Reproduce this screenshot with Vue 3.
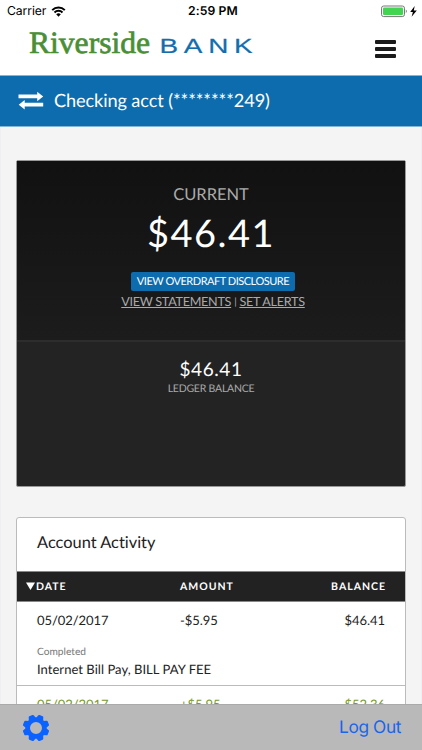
<script setup>
const rows = [
  { date: '05/02/2017', amount: '-$5.95', balance: '$46.41', status: 'Completed', memo: 'Internet Bill Pay, BILL PAY FEE', credit: false },
  { date: '05/02/2017', amount: '+$5.95', balance: '$52.36', credit: true },
]
const teeth = [0, 45, 90, 135, 180, 225, 270, 315]
</script>

<template>
  <div class="screen">
    <div class="status">
      <div class="carrier">
        <span>Carrier</span>
        <svg class="wifi" width="15" height="11" viewBox="0 0 14 11">
          <path d="M.7 4.1a8.9 8.9 0 0 1 12.6 0M3 6.5a5.7 5.7 0 0 1 8 0" fill="none" stroke="#000" stroke-width="2" />
          <path d="M7 10.7 4.7 8.3a3.3 3.3 0 0 1 4.6 0z" fill="#000" />
        </svg>
      </div>
      <span class="time">2:59 PM</span>
      <svg class="battery" width="38" height="13" viewBox="0 0 38 13">
        <rect x=".5" y="1" width="23" height="10.6" rx="2.2" fill="#fff" stroke="#777" />
        <rect x="2" y="2.5" width="20" height="7.6" rx="1" fill="#43d551" />
        <path d="M24.8 4.6c1.4.6 1.4 2.9 0 3.5z" fill="#777" />
        <path d="M33.7 1 29.2 7h2.7l-1.3 4.8L35.8 5.5h-3z" fill="#000" />
      </svg>
    </div>

    <header class="header">
      <svg class="logo" width="230" height="34" viewBox="0 0 230 34">
        <text class="river" x="1" y="27" textLength="121" lengthAdjust="spacingAndGlyphs">Riverside</text>
        <g transform="translate(131.5 26.5) scale(1.36 1)">
          <text class="bank" x="0" y="0" textLength="68.5" lengthAdjust="spacing">BANK</text>
        </g>
      </svg>
      <div class="menu"><i></i><i></i><i></i></div>
    </header>

    <div class="account">
      <svg width="26" height="20" viewBox="0 0 26 20" fill="#fff">
        <path d="M.5 3.6h18.7V.7l6 4.8-6 4.8V7.3H.5zM25.2 11.7H6.7V8.9l-6 4.8 6 4.8v-3h18.5z" />
      </svg>
      <span>Checking acct (********249)</span>
    </div>

    <main class="content">
      <section class="summary">
        <div class="current">
          <div class="label">CURRENT</div>
          <div class="amount">$46.41</div>
          <div class="disclosure"><span>VIEW OVERDRAFT DISCLOSURE</span></div>
          <div class="links"><a>VIEW STATEMENTS</a><span class="bar">|</span><a>SET ALERTS</a></div>
        </div>
        <div class="ledger">
          <div class="ledger-amount">$46.41</div>
          <div class="ledger-label">LEDGER BALANCE</div>
        </div>
      </section>

      <section class="activity">
        <h2>Account Activity</h2>
        <div class="thead">
          <div class="sort">
            <svg width="9" height="9" viewBox="0 0 9 9"><path d="M0 .5h9L4.5 8z" fill="#fff" /></svg>
            <span>DATE</span>
          </div>
          <span>AMOUNT</span>
          <span class="right">BALANCE</span>
        </div>
        <div v-for="(r, i) in rows" :key="i" class="entry" :class="{ credit: r.credit }">
          <div class="values">
            <span>{{ r.date }}</span><span>{{ r.amount }}</span><span class="right">{{ r.balance }}</span>
          </div>
          <template v-if="r.status">
            <div class="state">{{ r.status }}</div>
            <div class="memo">{{ r.memo }}</div>
          </template>
        </div>
      </section>
    </main>

    <footer class="toolbar">
      <svg width="28" height="28" viewBox="-14 -14 28 28">
        <circle r="8.3" fill="none" stroke="#0b62ff" stroke-width="4.6" />
        <path v-for="t in teeth" :key="t" :transform="`rotate(${t + 22.5})`" d="M-3.9-9.2-2.7-12.6Q-2.5-13.3-1.7-13.3H1.7Q2.5-13.3 2.7-12.6L3.9-9.2z" fill="#0b62ff" />
      </svg>
      <span class="logout">Log Out</span>
    </footer>
  </div>
</template>

<style>
body { margin: 0; overflow: hidden; }
</style>

<style scoped>
.screen { width: 422px; height: 750px; display: flex; flex-direction: column; overflow: hidden; background: #fff; font-family: Lato, sans-serif; font-variant-ligatures: none; text-rendering: geometricPrecision; white-space: nowrap; color: #222; }
.screen * { box-sizing: border-box; }
.status { height: 22px; flex: none; display: grid; grid-template-columns: 1fr auto 1fr; align-items: center; padding: 0 3px 0 7px; font: 12.2px/22px Inter, sans-serif; color: #000; }
.carrier { display: flex; align-items: center; gap: 5px; letter-spacing: -.1px; }
.time { font-weight: 600; letter-spacing: .1px; }
.battery { justify-self: end; }
.header { height: 53px; flex: none; display: flex; justify-content: space-between; padding: 4px 26px 0 28px; }
.river { font: 31px "Liberation Serif", serif; fill: #4a8f35; stroke: #4a8f35; stroke-width: .7; }
.bank { font: 20.5px "Liberation Sans", sans-serif; fill: #126eae; stroke: #126eae; stroke-width: .2; }
.menu { width: 21px; display: flex; flex-direction: column; gap: 3px; padding-top: 14px; }
.menu i { height: 4px; border-radius: 1px; background: #1b1b1b; }
.account { height: 52px; flex: none; display: flex; align-items: center; gap: 10px; padding: 0 18px 3px; background: #0d6cad; border-top: 1px solid #83b5d6; border-bottom: 1px solid #83b5d6; color: #fff; font-size: 18.2px; line-height: 24px; letter-spacing: -.12px; }
.account svg { flex: none; position: relative; top: 1px; }
.content { flex: 1; min-height: 0; overflow: hidden; background: #f4f4f4; border-left: 1px solid #efeff3; border-right: 1px solid #efeff3; padding: 33px 15px 0; }
.summary { height: 327px; border: 1px solid #999; border-radius: 2px; background: #232323; text-align: center; }
.current { height: 181px; padding-top: 21px; background: linear-gradient(#111, #1c1c1c); border-bottom: 2px solid #2d2d2d; }
.label { font-size: 16.5px; line-height: 24px; color: #aaa; }
.amount { font-size: 38px; line-height: 54px; letter-spacing: 1.5px; color: #fff; }
.disclosure { height: 21px; margin-top: 12px; padding-left: 4px; display: flex; justify-content: center; }
.disclosure span { width: 164px; height: 19px; border-radius: 2px; background: #0d6cad; color: #fff; font-size: 11px; line-height: 20px; letter-spacing: -.48px; }
.links { padding-left: 4px; display: flex; justify-content: center; gap: 3px; font-size: 12.6px; line-height: 18px; letter-spacing: -.27px; color: #aaa; }
.links a { text-decoration: underline; }
.bar { font-size: 10px; }
.ledger { padding-top: 16px; }
.ledger-amount { font-size: 19px; line-height: 24px; letter-spacing: .6px; color: #fff; }
.ledger-label { font-size: 10.5px; line-height: 15px; letter-spacing: -.22px; color: #aaa; }
.activity { height: 360px; margin-top: 30px; border: 1px solid #bbb; border-radius: 3px; background: #fff; }
h2 { height: 53px; margin: 0; padding-left: 20px; font-size: 16.4px; font-weight: 400; line-height: 50px; }
.thead, .values { display: grid; grid-template-columns: 143px 1fr auto; padding: 0 20px; }
.thead { height: 31px; align-items: center; background: #222; color: #fff; font-size: 10.5px; font-weight: 700; letter-spacing: 1px; border-top: 1px solid #888; border-bottom: 1px solid #888; }
.sort { display: flex; align-items: center; gap: 1px; margin-left: -11px; }
.thead .right { margin-right: -1px; }
.entry { height: 84px; padding-top: 8px; border-bottom: 1px solid #bbb; }
.values { font-size: 13px; line-height: 20px; letter-spacing: -.05px; }
.state { margin-top: 15px; padding-left: 20px; font-size: 10.2px; line-height: 15px; color: #777; }
.memo { padding-left: 20px; font-size: 13px; line-height: 19px; letter-spacing: 0.04px; }
.credit { color: #77992b; }
.toolbar { height: 46px; flex: none; display: flex; align-items: center; justify-content: space-between; padding: 0 21px 0 22px; background: #b9b9b9; border-top: 1px solid #aaa; }
.logout { font: 17.3px/24px Inter, sans-serif; letter-spacing: -.4px; color: #1765ed; }
</style>
